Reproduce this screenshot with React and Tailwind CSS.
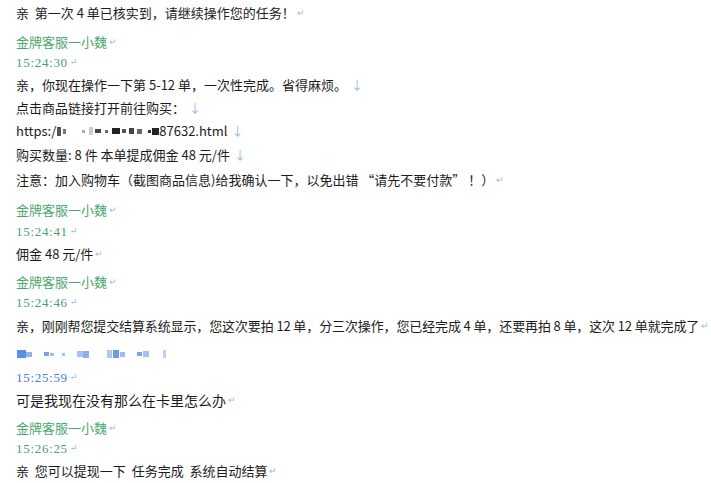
import React from 'react';

const BODY = { fontFamily: '"Noto Sans CJK SC", "Liberation Sans", sans-serif' };
const NAME = { fontFamily: '"Noto Sans CJK SC", serif' };
const TIME = { fontFamily: '"Liberation Serif", "DejaVu Serif", serif' };

function Ret() {
  return <span className="ml-[2px] text-[9px] text-[#9bbbe6] align-middle">↵</span>;
}

function Down() {
  return <span className="ml-[4px] text-[12px] text-[#8fb6ea]">↓</span>;
}

function Blob({ w, h = 'h-[7px]', c = 'bg-[#333]', ml = 'ml-[2px]' }) {
  return <span className={`inline-block ${w} ${h} ${c} ${ml} blur-[0.6px] align-middle`} />;
}

function Name({ mt }) {
  return (
    <div className={`h-[20px] flex items-center ${mt} text-[13px] text-[#4aa86c]`} style={NAME}>
      金牌客服一小魏<Ret />
    </div>
  );
}

function Time({ mt, t, blue }) {
  return (
    <div
      className={`h-[20px] flex items-center ${mt} text-[13px] tracking-[0.7px] ${blue ? 'text-[#3f7fdc]' : 'text-[#4aa078]'}`}
      style={TIME}
    >
      {t}<Ret />
    </div>
  );
}

function Line({ mt, tight, children }) {
  return (
    <div
      className={`h-[20px] flex items-center ${mt} text-[13px] text-[#1c1c1c] whitespace-nowrap ${tight ? 'tracking-[-0.12px]' : ''}`}
      style={BODY}
    >
      {children}
    </div>
  );
}

export default function App() {
  return (
    <div className="w-[711px] h-[483px] bg-white overflow-hidden pl-[16px]">
      <Line mt="mt-[3px]">亲&nbsp;&nbsp;第一次 4 单已核实到，请继续操作您的任务！<Ret /></Line>

      <Name mt="mt-[9px]" />
      <Time mt="mt-[1px]" t="15:24:30" />
      <Line mt="mt-[2px]">亲，你现在操作一下第 5-12 单，一次性完成。省得麻烦。<Down /></Line>
      <Line mt="mt-[3px]">点击商品链接打开前往购买：<Down /></Line>
      <Line mt="mt-[3px]">
        https:/
        <Blob w="w-[4px]" h="h-[9px]" c="bg-[#555]" ml="ml-[1px]" />
        <Blob w="w-[3px]" h="h-[5px]" c="bg-[#777]" />
        <Blob w="w-[3px]" h="h-[3px]" c="bg-[#aaa]" ml="ml-[16px]" />
        <Blob w="w-[4px]" h="h-[8px]" c="bg-[#ccc]" ml="ml-[4px]" />
        <Blob w="w-[6px]" h="h-[4px]" c="bg-[#444]" />
        <Blob w="w-[3px]" h="h-[3px]" c="bg-[#666]" ml="ml-[4px]" />
        <Blob w="w-[8px]" h="h-[6px]" c="bg-[#222]" ml="ml-[4px]" />
        <Blob w="w-[4px]" h="h-[4px]" c="bg-[#555]" />
        <Blob w="w-[5px]" h="h-[6px]" c="bg-[#444]" ml="ml-[3px]" />
        <Blob w="w-[5px]" h="h-[5px]" c="bg-[#666]" ml="ml-[3px]" />
        <Blob w="w-[3px]" h="h-[3px]" c="bg-[#333]" ml="ml-[6px]" />
        <Blob w="w-[7px]" h="h-[7px]" c="bg-[#222]" ml="ml-[1px]" />
        87632.html<Down />
      </Line>
      <Line mt="mt-[4px]">购买数量: 8 件 本单提成佣金 48 元/件<Down /></Line>
      <Line mt="mt-[5px]">注意：加入购物车（截图商品信息)给我确认一下，以免出错 “请先不要付款” ！）<Ret /></Line>

      <Name mt="mt-[10px]" />
      <Time mt="mt-[2px]" t="15:24:41" />
      <Line mt="mt-[2px]">佣金 48 元/件<Ret /></Line>

      <Name mt="mt-[8px]" />
      <Time mt="mt-[1px]" t="15:24:46" />
      <Line mt="mt-[3px]" tight>亲，刚刚帮您提交结算系统显示，您这次要拍 12 单，分三次操作，您已经完成 4 单，还要再拍 8 单，这次 12 单就完成了<Ret /></Line>

      <div className="h-[20px] mt-[8px] flex items-center">
        <Blob w="w-[9px]" h="h-[8px]" c="bg-[#5a8ee8]" ml="ml-[1px]" />
        <Blob w="w-[6px]" h="h-[5px]" c="bg-[#8fb2f0]" ml="ml-[0px]" />
        <Blob w="w-[5px]" h="h-[4px]" c="bg-[#7aa2ee]" ml="ml-[12px]" />
        <Blob w="w-[4px]" h="h-[3px]" c="bg-[#9dbbf0]" ml="ml-[1px]" />
        <Blob w="w-[3px]" h="h-[3px]" c="bg-[#a8c2f2]" ml="ml-[8px]" />
        <Blob w="w-[6px]" h="h-[6px]" c="bg-[#a8c2f2]" ml="ml-[12px]" />
        <Blob w="w-[6px]" h="h-[7px]" c="bg-[#8aaeef]" ml="ml-[0px]" />
        <Blob w="w-[5px]" h="h-[8px]" c="bg-[#b0c8f3]" ml="ml-[18px]" />
        <Blob w="w-[6px]" h="h-[8px]" c="bg-[#6e9aea]" ml="ml-[1px]" />
        <Blob w="w-[5px]" h="h-[5px]" c="bg-[#9dbbf0]" ml="ml-[1px]" />
        <Blob w="w-[5px]" h="h-[4px]" c="bg-[#7ea4ec]" ml="ml-[12px]" />
        <Blob w="w-[6px]" h="h-[6px]" c="bg-[#a3bff2]" ml="ml-[1px]" />
        <Blob w="w-[3px]" h="h-[8px]" c="bg-[#b9cff4]" ml="ml-[14px]" />
      </div>
      <Time mt="mt-[4px]" t="15:25:59" blue />
      <Line mt="mt-[2px]"><span style={NAME} className="text-[14px]">可是我现在没有那么在卡里怎么办</span><Ret /></Line>

      <Name mt="mt-[8px]" />
      <Time mt="mt-[1px]" t="15:26:25" />
      <Line mt="mt-[2px]">亲&nbsp;&nbsp;您可以提现一下&nbsp;&nbsp;任务完成&nbsp;&nbsp;系统自动结算<Ret /></Line>
    </div>
  );
}
